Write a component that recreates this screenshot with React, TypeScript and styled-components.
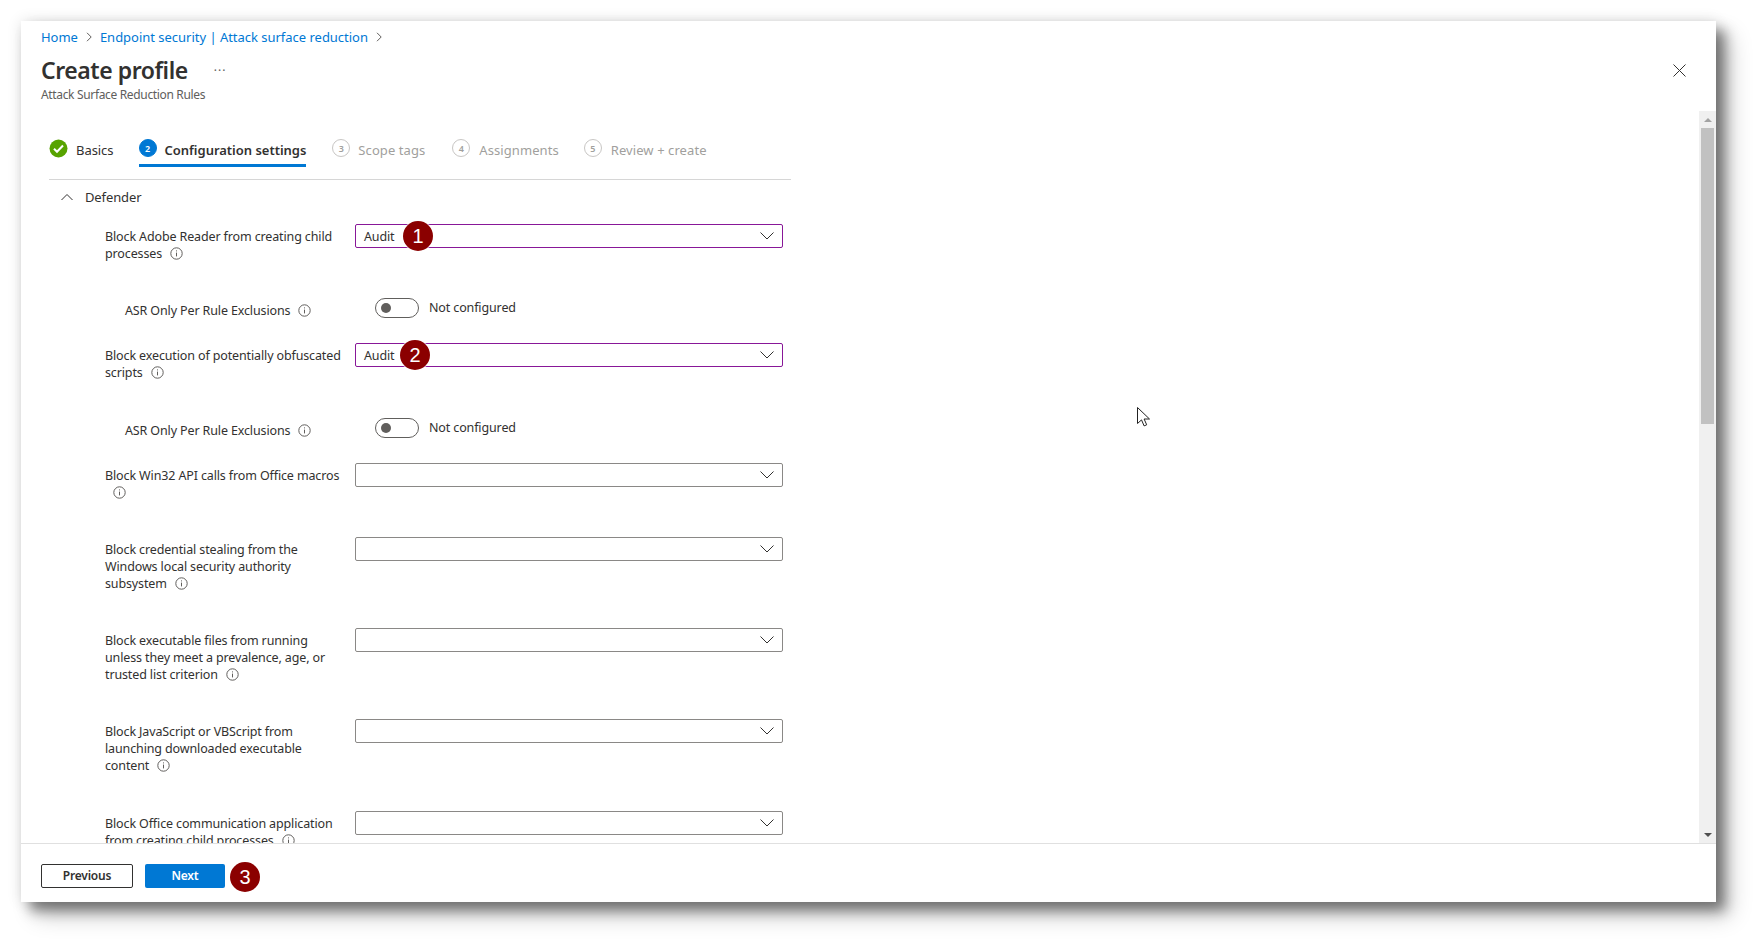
import React from "react";
import styled, { createGlobalStyle } from "styled-components";

const Global = createGlobalStyle`
  html, body { margin: 0; padding: 0; background: #fff; }
  body { font-family: "Noto Sans", "Open Sans", "Liberation Sans", sans-serif; color: #323130; }
`;
const Page = styled.div`
  width: 1758px; height: 944px; padding: 21px 0 0 21px; box-sizing: border-box; overflow: hidden; position: relative;
`;
const Panel = styled.div`
  width: 1695px; height: 881px; background: #fff; display: flex; flex-direction: column;
  box-shadow: 9px 9px 12px rgba(0,0,0,.42), 14px 14px 22px rgba(0,0,0,.2), 0 0 14px rgba(0,0,0,.12);
`;
const Header = styled.header`
  height: 90px; flex: none; padding: 7px 30px 0 20px; box-sizing: border-box; position: relative;
`;
const Crumbs = styled.nav`
  display: flex; align-items: center; gap: 6px; height: 18px; font-size: 13px; letter-spacing: -.02px; color: #0078d4;
`;
const Crumb = styled.span`white-space: nowrap;`;
const CrumbSep = styled.svg`width: 10px; height: 10px; stroke: #605e5c; fill: none; stroke-width: 1; flex: none;`;
const TitleRow = styled.div`
  display: flex; align-items: center; justify-content: space-between; margin-top: 8px; height: 32px;
`;
const TitleLeft = styled.div`display: flex; align-items: center; gap: 26px;`;
const Title = styled.h1`
  margin: 0; font-size: 23px; font-weight: 600; letter-spacing: -.45px; line-height: 32px; color: #323130; white-space: nowrap;
`;
const More = styled.span`font-size: 12px; line-height: 12px; color: #605e5c; letter-spacing: 1px; margin-top: 1px;`;
const Sub = styled.div`font-size: 12px; letter-spacing: -.34px; line-height: 16px; color: #605e5c; margin-top: 1px;`;

const Body = styled.div`flex: 1; min-height: 0; display: flex;`;
const Scroll = styled.main`flex: 1; min-width: 0; overflow: hidden;`;
const Tabs = styled.div`
  margin: 20px 0 0 28px; width: 742px; height: 49px; box-sizing: border-box; border-bottom: 1px solid #d6d6d6;
  display: flex; align-items: flex-start; 
`;
const Tab = styled.div<{ $active?: boolean; $ml: number; $gap: number }>`
  display: flex; align-items: flex-start; height: 36px; box-sizing: border-box; margin-left: ${p => p.$ml}px; gap: ${p => p.$gap}px;
  padding-top: 10px; white-space: nowrap; font-size: 13px; line-height: 18px;
  letter-spacing: ${p => (p.$active ? "-.02px" : ".08px")};
  font-weight: ${p => (p.$active ? 600 : 400)};
  color: ${p => (p.$active ? "#323130" : "#a19f9d")};
  border-bottom: 3px solid ${p => (p.$active ? "#0078d4" : "transparent")};
`;
const TabLabel = styled.span<{ $basics?: boolean }>`color: ${p => (p.$basics ? "#323130" : "inherit")}; letter-spacing: -.05px;`;
const Step = styled.span<{ $active?: boolean }>`
  width: 18px; height: 18px; margin-top: -2px; border-radius: 50%; box-sizing: border-box; flex: none;
  display: flex; align-items: center; justify-content: center; font-size: 9px; font-weight: 600; line-height: 1; letter-spacing: 0;
  background: ${p => (p.$active ? "#0078d4" : "#fff")};
  color: ${p => (p.$active ? "#fff" : "#a19f9d")};
  border: 1px solid ${p => (p.$active ? "#0078d4" : "#c8c6c4")};
`;
const CheckIcon = styled.svg`width: 19px; height: 19px; margin-top: -2px; flex: none;`;
const SectionHead = styled.div`
  height: 34px; margin-bottom: 10px; padding-left: 40px; display: flex; align-items: center; gap: 12px;
  font-size: 13px; letter-spacing: -.12px;
`;
const Chevron = styled.svg`width: 12px; height: 12px; fill: none; stroke: #323130; stroke-width: 1; flex: none;`;
const Row = styled.div<{ $h: number; $nested?: boolean }>`
  display: grid; grid-template-columns: 250px 428px; height: ${p => p.$h}px; margin-left: 84px; flex: none;
`;
const Label = styled.div<{ $nested?: boolean }>`
  font-size: 12.5px; letter-spacing: -.13px; line-height: 17px; padding-top: 4px; padding-left: ${p => (p.$nested ? 20 : 0)}px;
  color: #323130;
`;
const Line = styled.div`white-space: nowrap; display: flex; align-items: center; height: 17px;`;
const InfoIcon = styled.svg`
  width: 13px; height: 13px; margin-left: 8px; flex: none; fill: none; stroke: #605e5c;
`;
const Select = styled.div<{ $marked?: boolean }>`
  position: relative; height: 24px; box-sizing: border-box; display: flex; align-items: center; justify-content: space-between;
  padding: 0 8px; border-radius: 2px; background: #fff; font-size: 12.5px; letter-spacing: -.13px;
  border: 1px solid ${p => (p.$marked ? "#881798" : "#8a8886")};
`;
const SelectChevron = styled.svg`width: 14px; height: 8px; fill: none; stroke: #323130; stroke-width: 1; margin-left: auto;`;
const Badge = styled.span<{ $left?: number }>`
  width: 30px; height: 30px; border-radius: 50%; background: #8b0000; color: #fff; flex: none;
  display: flex; align-items: center; justify-content: center;
  font-family: "Liberation Sans", sans-serif; font-size: 20px; box-shadow: 0 0 0 1px rgba(255,255,255,.65);
  position: ${p => (p.$left !== undefined ? "absolute" : "static")};
  left: ${p => p.$left ?? 0}px;
  top: ${p => (p.$left !== undefined ? "-4px" : "auto")};
`;
const ToggleWrap = styled.div`display: flex; align-items: center; gap: 10px; padding-left: 20px; height: 20px; font-size: 12.5px; letter-spacing: -.13px;`;
const ToggleText = styled.span`margin-top: -2px; white-space: nowrap;`;
const Toggle = styled.span`
  width: 44px; height: 20px; box-sizing: border-box; border: 1px solid #605e5c; border-radius: 10px; display: block; position: relative; flex: none;
  &::after { content: ""; position: absolute; left: 5px; top: 4px; width: 10px; height: 10px; border-radius: 50%; background: #605e5c; }
`;
const ScrollBar = styled.aside`
  width: 17px; flex: none; background: #f0f0f0; display: flex; flex-direction: column; align-items: center; position: relative;
`;
const Arrow = styled.span<{ $down?: boolean }>`
  width: 0; height: 0; border-left: 4px solid transparent; border-right: 4px solid transparent; flex: none;
  ${p => (p.$down
    ? "border-top: 4px solid #505050; margin-top: auto; margin-bottom: 6px;"
    : "border-bottom: 4px solid #a3a3a3; margin-top: 7px;")}
`;
const Thumb = styled.span`width: 13px; height: 296px; margin-top: 6px; background: #c1c1c1; flex: none;`;
const Footer = styled.footer`
  height: 59px; flex: none; box-sizing: border-box; border-top: 1px solid #e0e0e0; padding: 20px 0 0 20px; display: flex; align-items: flex-start;
`;
const PrevBtn = styled.button`
  width: 92px; height: 24px; box-sizing: border-box; background: #fff; border: 1px solid #323130; border-radius: 2px;
  font: 600 12px "Noto Sans", sans-serif; letter-spacing: -.2px; color: #323130; padding: 0 0 2px;
`;
const NextBtn = styled.button`
  width: 80px; height: 24px; margin-left: 12px; box-sizing: border-box; background: #0078d4; border: 0; border-radius: 2px;
  font: 600 12px "Noto Sans", sans-serif; letter-spacing: -.2px; color: #fff; padding: 0 0 2px;
`;
const FooterBadge = styled(Badge)`margin: -2px 0 0 5px;`;
const CloseBtn = styled.svg`width: 13px; height: 13px; stroke: #323130; stroke-width: 1; fill: none;`;
const Cursor = styled.svg`position: absolute; left: 1136px; top: 406px; width: 15px; height: 22px;`;

const Info = () => (
  <InfoIcon viewBox="0 0 13 13">
    <circle cx="6.5" cy="6.5" r="5.7" />
    <path d="M6.5 5.6v3.8M6.5 3.4v1" />
  </InfoIcon>
);
const SelectArrow = () => (
  <SelectChevron viewBox="0 0 14 8"><path d="M.5.5 7 7l6.5-6.5" /></SelectChevron>
);

const Sep = () => <CrumbSep viewBox="0 0 10 10"><path d="M3 .8 7.2 5 3 9.2" /></CrumbSep>;

type RuleDef = { lines: string[]; h: number; value?: string; badge?: [number, string] };

const RuleRow = ({ lines, h, value, badge }: RuleDef) => (
  <Row $h={h}>
    <Label>
      {lines.map((l, i) => (
        <Line key={i}>{l}{i === lines.length - 1 && <Info />}</Line>
      ))}
    </Label>
    <Select $marked={!!badge}>
      {value}
      {badge && <Badge $left={badge[0]}>{badge[1]}</Badge>}
      <SelectArrow />
    </Select>
  </Row>
);
const AsrRow = ({ h }: { h: number }) => (
  <Row $h={h}>
    <Label $nested>
      <Line>ASR Only Per Rule Exclusions<Info /></Line>
    </Label>
    <ToggleWrap>
      <Toggle />
      <ToggleText>Not configured</ToggleText>
    </ToggleWrap>
  </Row>
);

export default function App() {
  return (
    <Page>
      <Global />
      <Panel>
        <Header>
          <Crumbs>
            <Crumb>Home</Crumb><Sep />
            <Crumb>Endpoint security | Attack surface reduction</Crumb><Sep />
          </Crumbs>
          <TitleRow>
            <TitleLeft>
              <Title>Create profile</Title>
              <More>···</More>
            </TitleLeft>
            <CloseBtn viewBox="0 0 13 13"><path d="M.5.5l12 12M12.5.5l-12 12" /></CloseBtn>
          </TitleRow>
          <Sub>Attack Surface Reduction Rules</Sub>
        </Header>
        <Body>
          <Scroll>
            <Tabs>
              <Tab $ml={0} $gap={8}>
                <CheckIcon viewBox="0 0 19 19">
                  <circle cx="9.5" cy="9.5" r="9" fill="#57a300" />
                  <path d="M5 9.8l3 3 6-6.3" fill="none" stroke="#fff" strokeWidth="2" />
                </CheckIcon>
                <TabLabel $basics>Basics</TabLabel>
              </Tab>
              <Tab $active $ml={25} $gap={8}><Step $active>2</Step>Configuration settings</Tab>
              <Tab $ml={26} $gap={8}><Step>3</Step>Scope tags</Tab>
              <Tab $ml={27} $gap={9}><Step>4</Step>Assignments</Tab>
              <Tab $ml={25} $gap={9}><Step>5</Step>Review + create</Tab>
            </Tabs>
            <SectionHead>
              <Chevron viewBox="0 0 12 12"><path d="M.5 9 6 3.5 11.5 9" /></Chevron>
              Defender
            </SectionHead>
            <RuleRow h={74} lines={["Block Adobe Reader from creating child", "processes"]} value="Audit" badge={[47, "1"]} />
            <AsrRow h={45} />
            <RuleRow h={75} lines={["Block execution of potentially obfuscated", "scripts"]} value="Audit" badge={[44, "2"]} />
            <AsrRow h={45} />
            <RuleRow h={74} lines={["Block Win32 API calls from Office macros", ""]} />
            <RuleRow h={91} lines={["Block credential stealing from the", "Windows local security authority", "subsystem"]} />
            <RuleRow h={91} lines={["Block executable files from running", "unless they meet a prevalence, age, or", "trusted list criterion"]} />
            <RuleRow h={92} lines={["Block JavaScript or VBScript from", "launching downloaded executable", "content"]} />
            <RuleRow h={74} lines={["Block Office communication application", "from creating child processes"]} />
          </Scroll>
          <ScrollBar>
            <Arrow />
            <Thumb />
            <Arrow $down />
          </ScrollBar>
        </Body>
        <Footer>
          <PrevBtn>Previous</PrevBtn>
          <NextBtn>Next</NextBtn>
          <FooterBadge>3</FooterBadge>
        </Footer>
      </Panel>
      <Cursor viewBox="0 0 15 22">
        <path d="M1.5 1.5v16l4-3.6 2.6 6 2.6-1.1-2.6-5.8h5.4z" fill="#fff" stroke="#222" strokeWidth="1" />
      </Cursor>
    </Page>
  );
}
